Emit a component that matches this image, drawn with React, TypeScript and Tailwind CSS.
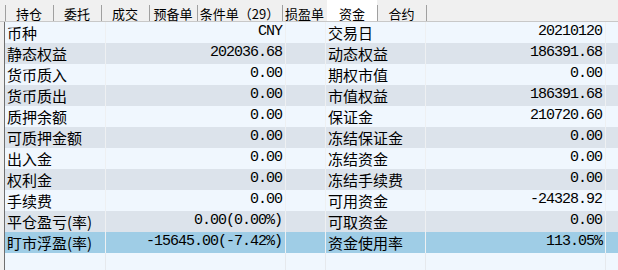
import React from "react";

const tabs: { label: string; w: number; active?: boolean }[] = [
  { label: "持仓", w: 48 },
  { label: "委托", w: 48 },
  { label: "成交", w: 48 },
  { label: "预备单", w: 48 },
  { label: "条件单（29）", w: 85 },
  { label: "损盈单", w: 45 },
  { label: "资金", w: 50, active: true },
  { label: "合约", w: 49 },
];

const rows: [string, string, string, string][] = [
  ["币种", "CNY", "交易日", "20210120"],
  ["静态权益", "202036.68", "动态权益", "186391.68"],
  ["货币质入", "0.00", "期权市值", "0.00"],
  ["货币质出", "0.00", "市值权益", "186391.68"],
  ["质押余额", "0.00", "保证金", "210720.60"],
  ["可质押金额", "0.00", "冻结保证金", "0.00"],
  ["出入金", "0.00", "冻结资金", "0.00"],
  ["权利金", "0.00", "冻结手续费", "0.00"],
  ["手续费", "0.00", "可用资金", "-24328.92"],
  ["平仓盈亏(率)", "0.00(0.00%)", "可取资金", "0.00"],
  ["盯市浮盈(率)", "-15645.00(-7.42%)", "资金使用率", "113.05%"],
];

const labelFont = { fontFamily: '"Noto Sans CJK SC", "Noto Sans", sans-serif' };
const monoFont = { fontFamily: '"Liberation Mono", "DejaVu Sans Mono", monospace' };

function Row({ r, idx }: { r?: [string, string, string, string]; idx: number }) {
  const bg =
    idx === 10 ? "bg-[#9fcde6]" : idx % 2 === 1 ? "bg-[#dce3eb]" : "bg-[#f0f7fe]";
  const cell = "h-[21px] border-r border-[#eef0f2] flex items-center";
  return (
    <div className={`flex ${bg}`}>
      <div className={`${cell} w-[101px] pl-[2px] text-[15px] leading-[21px] text-black`} style={labelFont}>
        {r?.[0]}
      </div>
      <div className={`${cell} w-[180px] justify-end pr-[3px] text-[15px] tracking-[-1px] text-black`} style={monoFont}>
        {r?.[1]}
      </div>
      <div className={`${cell} w-[40px]`} />
      <div className={`${cell} w-[100px] pl-[2px] text-[15px] leading-[21px] text-black`} style={labelFont}>
        {r?.[2]}
      </div>
      <div className={`${cell} w-[180px] justify-end pr-[3px] text-[15px] tracking-[-1px] text-black`} style={monoFont}>
        {r?.[3]}
      </div>
      <div className="h-[21px] w-[12px]" />
    </div>
  );
}

export default function App() {
  return (
    <div className="w-[618px] h-[270px] overflow-hidden bg-[#f0f0f0]">
      <div className="flex h-[21px] pl-[5px] bg-[#f0f0f0] border-b border-[#c8c8c8] box-content">
        {tabs.map((t) => (
          <div
            key={t.label}
            className={`relative flex h-[21px] ${t.active ? "bg-white" : ""}`}
            style={{ width: t.w }}
          >
            {!t.active && <span className="absolute left-0 top-[5px] h-[16px] w-px bg-[#a0a0a0]" />}
            <div
              className="flex-1 text-center pt-[7px] text-[13px] leading-[13px] text-black whitespace-nowrap"
              style={labelFont}
            >
              {t.label}
            </div>
          </div>
        ))}
        <div className="relative h-[21px]">
          <span className="absolute left-0 top-[5px] h-[16px] w-px bg-[#a0a0a0]" />
        </div>
      </div>
      <div className="ml-[4px] border-l border-[#6f6f6f] h-[248px] bg-[#f0f7fe]">
        {rows.map((r, i) => (
          <Row key={i} r={r} idx={i} />
        ))}
        <div className="flex h-[17px] bg-[#f0f7fe]">
          <div className="h-full w-[101px] border-r border-[#e6e9ed]" />
          <div className="h-full w-[180px] border-r border-[#e6e9ed]" />
          <div className="h-full w-[40px] border-r border-[#e6e9ed]" />
          <div className="h-full w-[100px] border-r border-[#e6e9ed]" />
          <div className="h-full w-[180px] border-r border-[#e6e9ed]" />
        </div>
      </div>
    </div>
  );
}
